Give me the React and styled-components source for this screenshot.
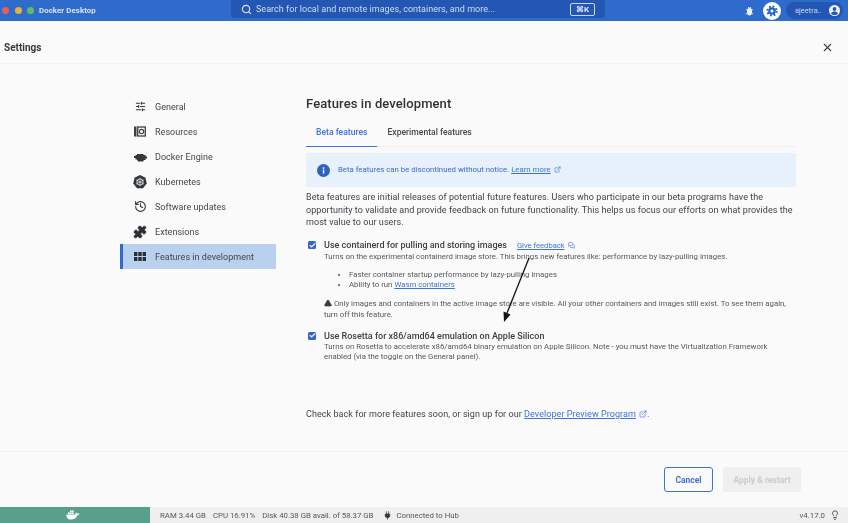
import React from "react";
import styled, { createGlobalStyle } from "styled-components";
import { Search, X, SlidersHorizontal, History, Puzzle, ExternalLink, MessagesSquare, Check, TriangleAlert, Lightbulb, Plug } from "lucide-react";

const navItems = [
  { id: 1, label: "General", icon: <SlidersHorizontal size={11} strokeWidth={2.4} /> },
  { id: 2, label: "Resources", icon: <ResourcesIcon /> },
  { id: 3, label: "Docker Engine", icon: <EngineIcon /> },
  { id: 4, label: "Kubernetes", icon: <KubeIcon /> },
  { id: 5, label: "Software updates", icon: <History size={13} strokeWidth={2} /> },
  { id: 6, label: "Extensions", icon: <Puzzle size={14} fill="#2b2f33" strokeWidth={1.5} /> },
  { id: 7, label: "Features in development", icon: <GridIcon />, active: true },
];

function ResourcesIcon() {
  return (
    <svg width="12" height="11" viewBox="0 0 12 11">
      <rect x="0" y="0.5" width="2.5" height="10" fill="#3c4146" />
      <rect x="3.7" y="1" width="7.6" height="9" fill="none" stroke="#3c4146" strokeWidth="1.3" />
      <circle cx="7.5" cy="5.5" r="2.2" fill="none" stroke="#3c4146" strokeWidth="1.2" />
    </svg>
  );
}

function EngineIcon() {
  return (
    <svg width="13" height="10" viewBox="0 0 13 10">
      <path d="M3 2h6l1 1h1.5v1.5H13v2h-1.5V8H10l-1 1.5H4L3 7.5H1.5V6H0V4h1.5V3H3z" fill="#33373b" />
    </svg>
  );
}

function KubeIcon() {
  return (
    <svg width="16" height="16" viewBox="0 0 16 16">
      <path d="M8 0l6.2 3 1.5 6.7L11.4 15H4.6L.3 9.7 1.8 3z" fill="#2f3337" />
      <circle cx="8" cy="8" r="3.6" fill="none" stroke="#e8e8e8" strokeWidth="1" />
      <path d="M8 3v10M3.3 5.5l9.4 5M12.7 5.5l-9.4 5" stroke="#e8e8e8" strokeWidth="0.8" />
    </svg>
  );
}

function GridIcon() {
  return (
    <svg width="12" height="9" viewBox="0 0 12 9" fill="#2b2f33">
      <rect x="0" y="0" width="3.4" height="4" />
      <rect x="4.3" y="0" width="3.4" height="4" />
      <rect x="8.600" y="0" width="3.4" height="4" />
      <rect x="0" y="5" width="3.4" height="4" />
      <rect x="4.3" y="5" width="3.4" height="4" />
      <rect x="8.600" y="5" width="3.4" height="4" />
    </svg>
  );
}

function InfoDisc() {
  return (
    <svg width="13" height="13" viewBox="0 0 13 13">
      <circle cx="6.5" cy="6.5" r="6.5" fill="#2f62bf" />
      <rect x="5.800" y="5.600" width="1.500" height="4" fill="#fff" />
      <rect x="5.800" y="3.300" width="1.500" height="1.500" fill="#fff" />
    </svg>
  );
}

function BugIcon() {
  return (
    <svg width="9" height="10" viewBox="0 0 9 10">
      <path d="M3 1l1 1h1l1-1M1 3.500l1.500 1M8 3.500l-1.500 1M.7 8l1.500-1M8.300 8l-1.500-1" stroke="#eef3fb" strokeWidth="0.8" fill="none" />
      <rect x="2" y="2" width="5" height="7.400" rx="2.400" fill="#eef3fb" />
    </svg>
  );
}

function GearIcon() {
  return (
    <svg width="12" height="12" viewBox="0 0 12 12">
      <circle cx="6" cy="6" r="4.600" fill="none" stroke="#2763c2" strokeWidth="2" strokeDasharray="1.800 1.810" />
      <circle cx="6" cy="6" r="3.800" fill="#2763c2" />
      <circle cx="6" cy="6" r="1.600" fill="#fff" />
    </svg>
  );
}

function UserIcon() {
  return (
    <svg width="11" height="11" viewBox="0 0 11 11">
      <circle cx="5.500" cy="5.500" r="5.500" fill="#f2f6fc" />
      <circle cx="5.500" cy="4" r="1.900" fill="#2456b4" />
      <path d="M2 8.400c.7-1.300 2-1.800 3.500-1.800S8.300 7.100 9 8.400C8.200 9.400 6.900 10 5.500 10S2.800 9.400 2 8.400z" fill="#2456b4" />
    </svg>
  );
}

function WhaleIcon() {
  return (
    <svg width="14" height="10" viewBox="0 0 14 10">
      <rect x="2" y="2.4" width="1.7" height="1.6" fill="#fff" />
      <rect x="4" y="2.4" width="1.7" height="1.6" fill="#fff" />
      <rect x="6" y="2.4" width="1.7" height="1.6" fill="#fff" />
      <rect x="4" y="0.4" width="1.7" height="1.6" fill="#fff" />
      <rect x="6" y="0.4" width="1.7" height="1.6" fill="#fff" />
      <path d="M0.3 4.4h9c.4-.5.3-1.600.9-2.200.6.4.9 1 1 1.500.6-.2 1.500-.2 2.300.3-.5 1-1.400 1.200-2.100 1.200C10.600 7.800 8.400 9.600 5 9.600 1.800 9.600.3 7.400.3 4.400z" fill="#fff" />
    </svg>
  );
}

const App = () => {
  return (
    <Page>
      <GlobalStyle />
      <TopBar>
        <Lights>
          <Light $color="#e0605a" />
          <Light $color="#e5b044" />
          <Light $color="#5fbf60" />
        </Lights>
        <AppName>Docker Desktop</AppName>
        <SearchBox>
          <Search size={11} strokeWidth={2.4} color="#dfe8f7" />
          <SearchText>Search for local and remote images, containers, and more...</SearchText>
          <Shortcut>⌘K</Shortcut>
        </SearchBox>
        <BarRight>
          <BugIcon />
          <SettingsDisc>
            <GearIcon />
          </SettingsDisc>
          <UserPill>
            <span>ajeetra..</span>
            <UserIcon />
          </UserPill>
        </BarRight>
      </TopBar>

      <Header>
        <h1>Settings</h1>
        <X size={13} color="#3b3f44" strokeWidth={2} />
      </Header>

      <Body>
        <Sidebar>
          {navItems.map((item) => (
            <NavItem key={item.id} $active={item.active}>
              <NavIcon>{item.icon}</NavIcon>
              <span>{item.label}</span>
            </NavItem>
          ))}
        </Sidebar>

        <Content>
          <Title>Features in development</Title>
          <Tabs>
            <Tab $active>Beta features</Tab>
            <Tab>Experimental features</Tab>
          </Tabs>

          <Banner>
            <BannerIcon>
              <InfoDisc />
            </BannerIcon>
            <span>
              Beta features can be discontinued without notice. <a>Learn more</a>
              <LinkGlyph><ExternalLink size={7} /></LinkGlyph>
            </span>
          </Banner>

          <Intro>
            Beta features are initial releases of potential future features. Users who participate in our beta programs have the
            opportunity to validate and provide feedback on future functionality. This helps us focus our efforts on what provides the
            most value to our users.
          </Intro>

          <Feature>
            <Box><Check size={7} color="#fff" strokeWidth={4} /></Box>
            <div>
              <FeatureTitle>
                Use containerd for pulling and storing images
                <Feedback>Give feedback</Feedback>
                <LinkGlyph><MessagesSquare size={7} /></LinkGlyph>
              </FeatureTitle>
              <Detail>Turns on the experimental containerd image store. This brings new features like: performance by lazy-pulling images.</Detail>
              <Bullets>
                <li>Faster container startup performance by lazy-pulling images</li>
                <li>Ability to run <a>Wasm containers</a></li>
              </Bullets>
              <Warning>
                <WarnGlyph><TriangleAlert size={8} fill="#3a3e42" color="#3a3e42" /></WarnGlyph> Only images and containers in the active image store are visible. All your other containers and images still exist. To see them again, turn off this feature.
              </Warning>
            </div>
          </Feature>

          <Feature $second>
            <Box><Check size={7} color="#fff" strokeWidth={4} /></Box>
            <div>
              <FeatureTitle>Use Rosetta for x86/amd64 emulation on Apple Silicon</FeatureTitle>
              <Detail>Turns on Rosetta to accelerate x86/amd64 binary emulation on Apple Silicon. Note - you must have the Virtualization Framework enabled (via the toggle on the General panel).</Detail>
            </div>
          </Feature>

          <Outro>
            Check back for more features soon, or sign up for our <a>Developer Preview Program</a>
            <LinkGlyph><ExternalLink size={8} /></LinkGlyph>.
          </Outro>
        </Content>

        <Arrow width="40" height="70" viewBox="0 0 40 70">
          <path d="M29 0L7 55" stroke="#111" strokeWidth="1.300" fill="none" />
          <path d="M4 64L3.500 53.500L10.500 56.500z" fill="#111" />
        </Arrow>
      </Body>

      <Actions>
        <CancelButton>Cancel</CancelButton>
        <ApplyButton>Apply &amp; restart</ApplyButton>
      </Actions>

      <StatusBar>
        <WhaleTab><WhaleIcon /></WhaleTab>
        <Stats>
          <span>RAM 3.44 GB</span>
          <span>CPU 16.91%</span>
          <span>Disk 40.38 GB avail. of 58.37 GB</span>
          <Hub><Plug size={9} fill="#33373b" color="#33373b" />Connected to Hub</Hub>
        </Stats>
        <Version>
          v4.17.0
          <Lightbulb size={10} color="#3b3f44" />
        </Version>
      </StatusBar>
    </Page>
  );
};

export default App;

// --- Styled Components ---

const GlobalStyle = createGlobalStyle`
  html, body {
    margin: 0;
    padding: 0;
    background: #fafafa;
  }
  * {
    box-sizing: border-box;
  }
`;

const Page = styled.div`
  width: 848px;
  height: 523px;
  overflow: hidden;
  display: flex;
  flex-direction: column;
  background: #fafafa;
  color: #3f4449;
  font-family: Roboto, "Liberation Sans", sans-serif;
  filter: blur(0.5px);

  a {
    color: #3f72d8;
    text-decoration: underline;
  }
`;

const TopBar = styled.header`
  height: 21px;
  flex-shrink: 0;
  background: #2f6bcb;
  display: flex;
  align-items: center;
  padding-left: 2px;
`;

const Lights = styled.div`
  display: flex;
  gap: 5.500px;
  width: 37px;
`;

const Light = styled.i`
  width: 7px;
  height: 7px;
  border-radius: 50%;
  background: ${(p) => p.$color};
`;

const AppName = styled.div`
  width: 192px;
  color: #d8e4f7;
  font-size: 7.800px;
  font-weight: 700;
  letter-spacing: 0.1px;
`;

const SearchBox = styled.div`
  width: 374px;
  height: 18px;
  align-self: flex-start;
  background: #2456b4;
  border-radius: 0 0 3px 3px;
  display: flex;
  align-items: center;
  padding: 0 10px 0 10px;
  gap: 4px;
`;

const SearchText = styled.span`
  flex: 1;
  color: #d0ddf3;
  font-size: 9px;
  letter-spacing: 0.03px;
  white-space: nowrap;
`;

const Shortcut = styled.span`
  width: 25px;
  height: 13px;
  border: 1px solid #c8d7f1;
  border-radius: 2px;
  color: #dbe6f8;
  font-size: 8px;
  font-weight: 700;
  text-align: center;
  line-height: 11px;
`;

const BarRight = styled.div`
  margin-left: auto;
  display: flex;
  align-items: center;
  padding-right: 5px;
  gap: 9px;
`;

const SettingsDisc = styled.div`
  width: 18px;
  height: 18px;
  border-radius: 50%;
  background: #fff;
  display: flex;
  align-items: center;
  justify-content: center;
`;

const UserPill = styled.div`
  width: 57px;
  height: 17px;
  margin-left: -4px;
  border-radius: 9px;
  background: #2456b4;
  color: #c8d7f1;
  font-size: 7.500px;
  display: flex;
  align-items: center;
  justify-content: space-between;
  padding: 0 3px 0 9px;
`;

const Header = styled.div`
  height: 43px;
  flex-shrink: 0;
  display: flex;
  align-items: center;
  justify-content: space-between;
  padding: 10px 14px 0 4px;
  border-bottom: 1px solid #f1f1f1;

  h1 {
    margin: 0;
    font-size: 10px;
    font-weight: 700;
    color: #35393d;
  }
`;

const Body = styled.main`
  position: relative;
  flex: 1;
  display: flex;
  padding-left: 120px;
  min-height: 0;
`;

const Sidebar = styled.nav`
  width: 156px;
  flex-shrink: 0;
  padding-top: 30px;
`;

const NavItem = styled.div`
  height: 25px;
  display: flex;
  align-items: center;
  font-size: 9px;
  letter-spacing: 0.03px;
  color: #42474c;
  padding-left: ${(p) => (p.$active ? "10px" : "13px")};
  background: ${(p) => (p.$active ? "#bad0ef" : "transparent")};
  border-left: ${(p) => (p.$active ? "3px solid #2f6bcb" : "none")};
`;

const NavIcon = styled.span`
  width: 22px;
  display: flex;
  justify-content: center;
  padding-right: 8px;
  color: #33373b;
`;

const Content = styled.section`
  width: 490px;
  margin-left: 30px;
  padding-top: 31px;
`;

const Title = styled.h2`
  margin: 0;
  height: 18px;
  font-size: 13px;
  line-height: 18px;
  font-weight: 500;
  color: #2e3236;
  letter-spacing: 0.1px;
`;

const Tabs = styled.div`
  display: flex;
  height: 32px;
  margin-top: 2px;
  border-bottom: 1px solid #f0f0f0;
`;

const Tab = styled.div`
  padding: 0 10px;
  height: 32px;
  line-height: 34px;
  font-size: 8.600px;
  font-weight: 500;
  color: ${(p) => (p.$active ? "#3f72d8" : "#45494e")};
  border-bottom: ${(p) => (p.$active ? "1px solid #3f72d8" : "none")};
`;

const Banner = styled.div`
  height: 34px;
  margin-top: 6px;
  background: #e7f1fb;
  border-radius: 2px;
  display: flex;
  align-items: center;
  padding-left: 11px;
  font-size: 7.800px;
  color: #3f68c8;
`;

const BannerIcon = styled.span`
  width: 21px;
  display: flex;
`;

const LinkGlyph = styled.span`
  display: inline-block;
  margin-left: 3px;
  color: #3f72d8;
  vertical-align: -1px;
`;

const WarnGlyph = styled.span`
  display: inline-block;
  vertical-align: -1px;
  line-height: 0;
`;

const Intro = styled.p`
  margin: 4px 0 0;
  font-size: 9px;
  line-height: 12.500px;
  letter-spacing: 0.06px;
  color: #3f4449;
`;

const Feature = styled.div`
  display: flex;
  margin-top: ${(p) => (p.$second ? "9.500px" : "10.500px")};
`;

const Box = styled.span`
  width: 8px;
  height: 8px;
  flex-shrink: 0;
  margin: 2px 8px 0 2px;
  border-radius: 1.500px;
  background: #3566c7;
  display: flex;
  align-items: center;
  justify-content: center;
`;

const FeatureTitle = styled.div`
  font-size: 9px;
  line-height: 12px;
  font-weight: 500;
  color: #3c4045;
`;

const Feedback = styled.a`
  margin-left: 10px;
  font-size: 7.600px;
  font-weight: 400;
`;

const Detail = styled.div`
  font-size: 7.800px;
  line-height: 10.500px;
  color: #54585d;
`;

const Bullets = styled.ul`
  margin: 7.500px 0 0;
  padding-left: 25px;
  font-size: 7.800px;
  line-height: 10px;
  color: #54585d;
`;

const Warning = styled.div`
  margin-top: 9px;
  font-size: 7.800px;
  line-height: 10.500px;
  color: #54585d;
`;

const Outro = styled.p`
  margin: 45.500px 0 0;
  font-size: 9px;
  line-height: 12px;
  letter-spacing: 0.06px;
`;

const Arrow = styled.svg`
  position: absolute;
  left: 500px;
  top: 194px;
`;

const Actions = styled.div`
  height: 56px;
  flex-shrink: 0;
  border-top: 1px solid #f1f1f1;
  display: flex;
  justify-content: flex-end;
  align-items: center;
  gap: 10px;
  padding: 0 47px 0 0;
`;

const CancelButton = styled.button`
  width: 49px;
  height: 25px;
  font: 700 8.500px Roboto, sans-serif;
  color: #3f72d8;
  background: transparent;
  border: 1.500px solid #3f72d8;
  border-radius: 3px;
`;

const ApplyButton = styled.button`
  width: 78px;
  height: 25px;
  font: 700 8.500px Roboto, sans-serif;
  color: #c9cbce;
  background: #efefef;
  border: none;
  border-radius: 3px;
`;

const StatusBar = styled.footer`
  height: 16px;
  flex-shrink: 0;
  background: #efefef;
  display: flex;
  align-items: center;
  font-size: 7.800px;
  color: #54585d;
`;

const WhaleTab = styled.div`
  width: 150px;
  height: 16px;
  background: #5a9e8c;
  display: flex;
  align-items: center;
  justify-content: center;
  margin-right: 10px;
  padding-right: 4px;
`;

const Stats = styled.div`
  display: flex;
  gap: 7px;
`;

const Hub = styled.span`
  display: flex;
  align-items: center;
  gap: 4px;
  margin-left: 3px;
`;

const Version = styled.div`
  margin-left: auto;
  display: flex;
  align-items: center;
  gap: 5px;
  padding-right: 8px;
`;
